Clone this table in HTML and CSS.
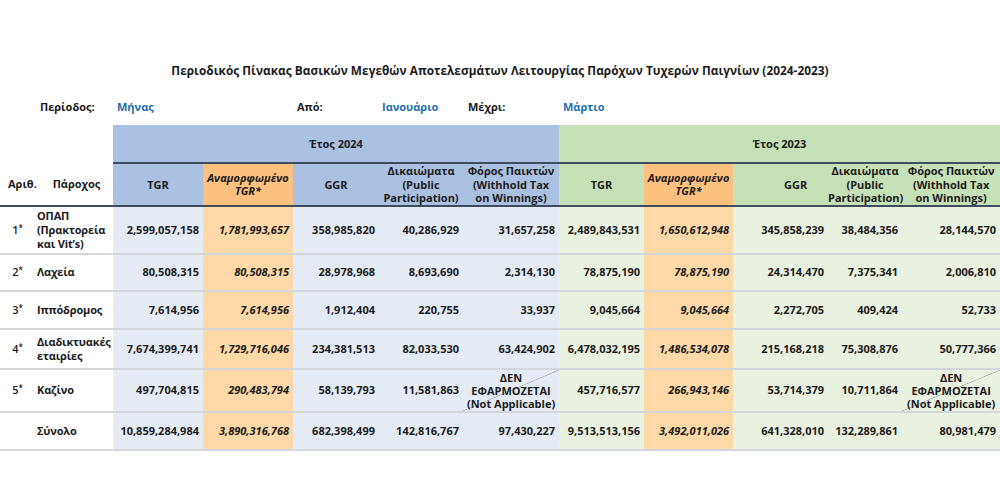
FILE: index.html
```html
<!DOCTYPE html>
<html lang="el">
<head>
<meta charset="utf-8">
<link rel="stylesheet" href="styles.css">
</head>
<body>
<div class="page">
  <h1 class="title">Περιοδικός Πίνακας Βασικών Μεγεθών Αποτελεσμάτων Λειτουργίας Παρόχων Τυχερών Παιγνίων (2024-2023)</h1>
  <div class="period">
    <span class="lbl">Περίοδος:</span>
    <span class="val">Μήνας</span>
    <span class="lbl">Από:</span>
    <span class="val">Ιανουάριο</span>
    <span class="lbl">Μέχρι:</span>
    <span class="val">Μάρτιο</span>
  </div>
  <table class="grid">
    <colgroup>
      <col class="c-num"><col class="c-name">
      <col class="c90"><col class="c90"><col class="c86"><col class="c84"><col class="c96">
      <col class="c85"><col class="c89"><col class="c95"><col class="c74"><col class="c98">
    </colgroup>
    <thead>
      <tr class="h1">
        <th colspan="2" class="blank"></th>
        <th colspan="5" class="b-h year">Έτος 2024</th>
        <th colspan="5" class="g-h year">Έτος 2023</th>
      </tr>
      <tr class="h2">
        <th class="num-h">Αριθ.</th>
        <th class="name-h">Πάροχος</th>
        <th class="b-h">TGR</th>
        <th class="o-h it">Αναμορφωμένο<br>TGR*</th>
        <th class="b-h">GGR</th>
        <th class="b-h">Δικαιώματα<br>(Public<br>Participation)</th>
        <th class="b-h">Φόρος Παικτών<br>(Withhold Tax<br>on Winnings)</th>
        <th class="g-h">TGR</th>
        <th class="o-h it">Αναμορφωμένο<br>TGR*</th>
        <th class="g-h ggr23">GGR</th>
        <th class="g-h">Δικαιώματα<br>(Public<br>Participation)</th>
        <th class="g-h">Φόρος Παικτών<br>(Withhold Tax<br>on Winnings)</th>
      </tr>
    </thead>
    <tbody>
      <tr class="r1">
        <td class="num">1<sup>*</sup></td><td class="name">ΟΠΑΠ<br>(Πρακτορεία<br>και Vit’s)</td>
        <td class="b">2,599,057,158</td><td class="o">1,781,993,657</td><td class="b">358,985,820</td><td class="b">40,286,929</td><td class="b">31,657,258</td>
        <td class="g">2,489,843,531</td><td class="o">1,650,612,948</td><td class="g">345,858,239</td><td class="g">38,484,356</td><td class="g">28,144,570</td>
      </tr>
      <tr class="r2">
        <td class="num">2<sup>*</sup></td><td class="name">Λαχεία</td>
        <td class="b">80,508,315</td><td class="o">80,508,315</td><td class="b">28,978,968</td><td class="b">8,693,690</td><td class="b">2,314,130</td>
        <td class="g">78,875,190</td><td class="o">78,875,190</td><td class="g">24,314,470</td><td class="g">7,375,341</td><td class="g">2,006,810</td>
      </tr>
      <tr class="r3">
        <td class="num">3<sup>*</sup></td><td class="name">Ιππόδρομος</td>
        <td class="b">7,614,956</td><td class="o">7,614,956</td><td class="b">1,912,404</td><td class="b">220,755</td><td class="b">33,937</td>
        <td class="g">9,045,664</td><td class="o">9,045,664</td><td class="g">2,272,705</td><td class="g">409,424</td><td class="g">52,733</td>
      </tr>
      <tr class="r4">
        <td class="num">4<sup>*</sup></td><td class="name">Διαδικτυακές<br>εταιρίες</td>
        <td class="b">7,674,399,741</td><td class="o">1,729,716,046</td><td class="b">234,381,513</td><td class="b">82,033,530</td><td class="b">63,424,902</td>
        <td class="g">6,478,032,195</td><td class="o">1,486,534,078</td><td class="g">215,168,218</td><td class="g">75,308,876</td><td class="g">50,777,366</td>
      </tr>
      <tr class="r5">
        <td class="num">5<sup>*</sup></td><td class="name">Καζίνο</td>
        <td class="b">497,704,815</td><td class="o">290,483,794</td><td class="b">58,139,793</td><td class="b">11,581,863</td><td class="b na">ΔΕΝ<br>ΕΦΑΡΜΟΖΕΤΑΙ<br>(Not Applicable)</td>
        <td class="g">457,716,577</td><td class="o">266,943,146</td><td class="g">53,714,379</td><td class="g">10,711,864</td><td class="g na">ΔΕΝ<br>ΕΦΑΡΜΟΖΕΤΑΙ<br>(Not Applicable)</td>
      </tr>
      <tr class="rt">
        <td class="num"></td><td class="name">Σύνολο</td>
        <td class="b">10,859,284,984</td><td class="o">3,890,316,768</td><td class="b">682,398,499</td><td class="b">142,816,767</td><td class="b">97,430,227</td>
        <td class="g">9,513,513,156</td><td class="o">3,492,011,026</td><td class="g">641,328,010</td><td class="g">132,289,861</td><td class="g">80,981,479</td>
      </tr>
    </tbody>
  </table>
</div>
</body>
</html>
```

FILE: styles.css
```css
* { box-sizing: border-box; }
html, body { margin: 0; padding: 0; background: #fff; }
body {
  font-family: "Open Sans", "Noto Sans", sans-serif;
  color: #1b1b1b;
  width: 1000px;
  height: 500px;
  overflow: hidden;
}
.page { padding-top: 61px; }
.title {
  margin: 0;
  text-align: center;
  font-size: 11.8px;
  font-weight: 700;
  line-height: 18px;
  letter-spacing: 0.05px;
}
.period {
  display: grid;
  grid-template-columns: 77px 180px 85px 86px 95px auto;
  padding-left: 40px;
  margin-top: 21px;
  height: 25px;
  font-size: 11px;
  font-weight: 700;
  line-height: 14px;
}
.period .val { color: #1e6fae; }

.grid {
  width: 1000px;
  table-layout: fixed;
  border-collapse: collapse;
  font-size: 11px;
  font-weight: 700;
  line-height: 14px;
}
.c-num { width: 32px; }
.c-name { width: 81px; }
.c90 { width: 90px; }
.c86 { width: 86px; }
.c84 { width: 84px; }
.c96 { width: 96px; }
.c85 { width: 85px; }
.c89 { width: 89px; }
.c95 { width: 95px; }
.c74 { width: 74px; }
.c98 { width: 98px; }

th, td { padding: 0; }
th { font-weight: 700; text-align: center; vertical-align: middle; line-height: 13.5px; }

.h1 { height: 38px; }
.h1 th.b-h, .h1 th.g-h { border-bottom: 2px solid #3e4d5e; }
.h1 .year { font-size: 11px; }
.h2 { height: 41px; }
.h2 th { border-bottom: 2px solid #3e4d5e; }
.num-h { text-align: center; padding-left: 8px; }
.name-h { text-align: center; padding-left: 8px; }
.ggr23 { padding-left: 30px; }

.b-h { background: #abc1e1; }
.g-h { background: #c6e0b7; }
.o-h { background: #fcc17f; }
.it { font-style: italic; }

tbody td {
  border-bottom: 2px solid #d3d6db;
  vertical-align: middle;
  text-align: right;
  padding-right: 4px;
  white-space: nowrap;
}
tbody td.b { background: #e5ebf5; }
tbody td.g { background: #e9f1e1; }
tbody td.o { background: #fed8a6; font-style: italic; }
tbody td.num { text-align: center; padding: 0 0 0 3px; font-weight: 600; }
tbody td.num sup { font-size: 8px; line-height: 0; vertical-align: 3px; }
tbody td.name { text-align: left; padding-left: 5px; letter-spacing: -0.15px; }
tbody td.na {
  text-align: center;
  padding-right: 0;
  line-height: 13px;
  background-image: linear-gradient(to bottom right, transparent calc(50% - 0.6px), #9ea3aa 50%, transparent calc(50% + 0.6px));
}
.r1 { height: 48px; }
.r2 { height: 37px; }
.r3 { height: 38px; }
.r4 { height: 40px; }
.r5 { height: 43px; }
.rt { height: 38px; }
```
